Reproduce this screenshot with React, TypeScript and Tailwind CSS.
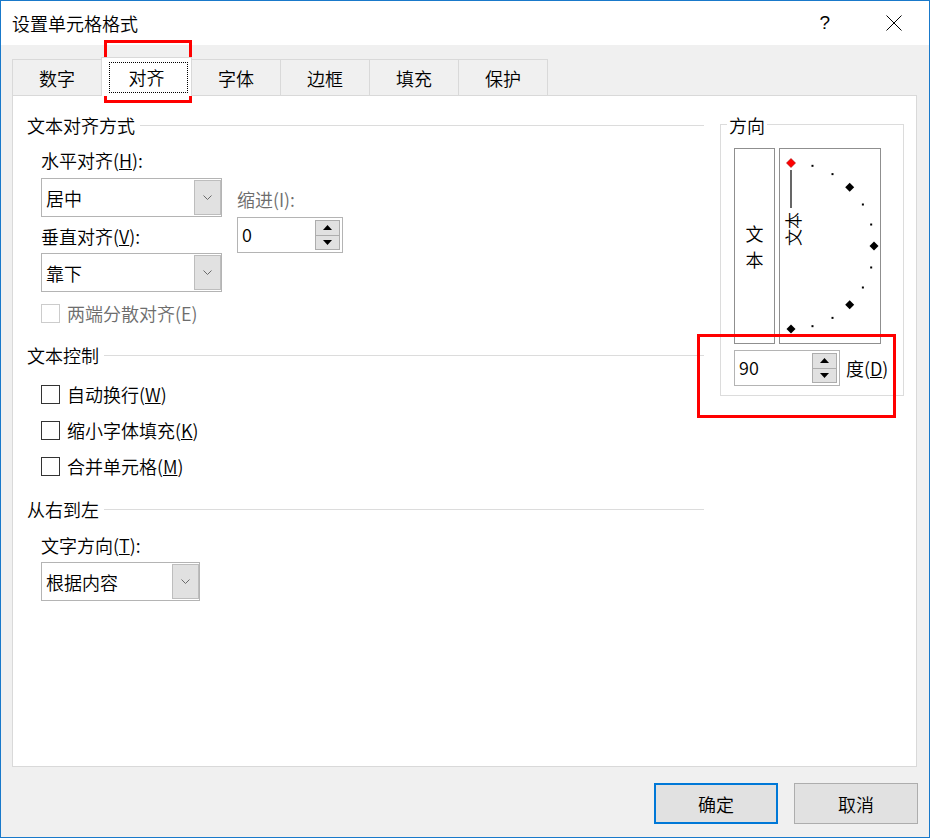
import React from "react";

const Chevron = () => (
  <svg width="9" height="5" viewBox="0 0 9 5">
    <polyline points="0.5,0.5 4.5,4.5 8.5,0.5" fill="none" stroke="#6a6a6a" strokeWidth="1" />
  </svg>
);

function Select({ value, width }: { value: string; width: string }) {
  return (
    <div className={`${width} h-[39px] flex border border-[#b4b4b4] bg-white`}>
      <div className="flex-1 flex items-center pl-[4px]">{value}</div>
      <div className="w-[27px] my-[1px] bg-[#e1e1e1] border border-[#bdbdbd] flex items-center justify-center">
        <Chevron />
      </div>
    </div>
  );
}

function Spinner({ value }: { value: string }) {
  return (
    <div className="w-[106px] h-[36px] flex border border-[#b4b4b4] bg-white">
      <div className="flex-1 flex items-center pl-[4px] pb-[2px]">{value}</div>
      <div className="w-[25px] my-[2px] mr-[2px] flex flex-col">
        <div className="flex-1 bg-[#e1e1e1] border border-[#adadad] flex items-center justify-center">
          <svg width="9" height="5" viewBox="0 0 9 5">
            <polygon points="0,5 4.5,0 9,5" fill="#000" />
          </svg>
        </div>
        <div className="flex-1 bg-[#e1e1e1] border border-[#adadad] border-t-0 flex items-center justify-center">
          <svg width="9" height="5" viewBox="0 0 9 5">
            <polygon points="0,0 4.5,5 9,0" fill="#000" />
          </svg>
        </div>
      </div>
    </div>
  );
}

function Heading({ text, className = "" }: { text: string; className?: string }) {
  return (
    <div className={`flex items-center h-[24px] ${className}`}>
      <span>{text}</span>
      <div className="flex-1 h-px bg-[#dcdcdc] ml-[5px]" />
    </div>
  );
}

function Check({ children, disabled, className = "" }: { children: React.ReactNode; disabled?: boolean; className?: string }) {
  return (
    <div className={`flex items-center h-[24px] pl-[14px] ${className}`}>
      <div
        className={`w-[19px] h-[19px] bg-white border ${disabled ? "border-[#cccccc]" : "border-[#333333]"}`}
      />
      <span className={`ml-[7px] ${disabled ? "text-[#6d6d6d]" : ""}`}>{children}</span>
    </div>
  );
}

function Dial() {
  const cx = 11;
  const cy = 97;
  const r = 83;
  const angles = [90, 75, 60, 45, 30, 15, 0, -15, -30, -45, -60, -75, -90];
  return (
    <svg width="100" height="194" viewBox="0 0 100 194">
      {angles.map((a) => {
        const x = cx + r * Math.cos((a * Math.PI) / 180);
        const y = cy - r * Math.sin((a * Math.PI) / 180);
        if (a % 45 === 0) {
          const s = 4.5;
          return (
            <polygon
              key={a}
              points={`${x},${y - s} ${x + s},${y} ${x},${y + s} ${x - s},${y}`}
              fill={a === 90 ? "#ff0000" : "#000"}
              stroke={a === 90 ? "#a00000" : "none"}
              strokeWidth="0.6"
            />
          );
        }
        return <rect key={a} x={x - 1} y={y - 1} width="2" height="2" fill="#000" />;
      })}
      <line x1={cx} y1={21} x2={cx} y2={59} stroke="#000" strokeWidth="1.2" />
      <text
        transform="translate(12,80) rotate(-90)"
        textAnchor="middle"
        dominantBaseline="central"
        fontSize="17"
        fontFamily="'Noto Sans CJK SC', sans-serif"
        fill="#000"
      >
        文本
      </text>
    </svg>
  );
}

const tabs = ["数字", "对齐", "字体", "边框", "填充", "保护"];

export default function App() {
  return (
    <div className="relative w-[930px] h-[838px] border border-[#1979ca] bg-[#f0f0f0] flex flex-col text-[18px] leading-[24px] font-[350] text-black font-['Noto_Sans_CJK_SC','Liberation_Sans',sans-serif]">
      {/* title bar */}
      <div className="h-[44px] bg-white flex items-center pl-[11px] shrink-0">
        <span>设置单元格格式</span>
        <span className="ml-auto mr-[56px] text-[19px] font-['Liberation_Sans',sans-serif]">?</span>
        <svg width="16" height="16" viewBox="0 0 16 16" className="mr-[27px]">
          <path d="M0.5 0.5 L15.5 15.5 M15.5 0.5 L0.5 15.5" stroke="#000" strokeWidth="1" />
        </svg>
      </div>

      {/* tabs */}
      <div className="mt-[12px] h-[38px] flex items-end pl-[11px] shrink-0">
        {tabs.map((t, i) =>
          i === 1 ? (
            <div
              key={t}
              className="relative z-10 -ml-px -mb-px w-[91px] h-[39px] bg-white border border-b-0 border-[#d9d9d9] flex items-center justify-center"
            >
              {t}
              <div className="absolute left-[7px] right-[3px] top-[4px] bottom-[3px] border border-dotted border-black" />
            </div>
          ) : (
            <div
              key={t}
              className={`${i === 0 ? "" : "-ml-px"} w-[90px] h-[36px] border border-b-0 border-[#d9d9d9] flex items-center justify-center`}
            >
              {t}
            </div>
          )
        )}
      </div>

      {/* panel */}
      <div className="mx-[11px] w-[905px] h-[672px] bg-white border border-[#d9d9d9] flex pl-[14px] pt-[17px] shrink-0">
        <div className="w-[677px] flex flex-col">
          <Heading text="文本对齐方式" />
          <div className="mt-[11px] pl-[14px]">
            水平对齐(<u>H</u>):
          </div>
          <div className="mt-[6px] pl-[14px] flex">
            <div className="flex flex-col">
              <Select value="居中" width="w-[181px]" />
              <div className="mt-[7px]">
                垂直对齐(<u>V</u>):
              </div>
              <div className="mt-[5px]">
                <Select value="靠下" width="w-[181px]" />
              </div>
            </div>
            <div className="ml-[15px] flex flex-col pt-[9px]">
              <div className="text-[#6d6d6d]">缩进(I):</div>
              <div className="mt-[6px]">
                <Spinner value="0" />
              </div>
            </div>
          </div>
          <Check disabled className="mt-[9px]">
            两端分散对齐(E)
          </Check>

          <Heading text="文本控制" className="mt-[18px]" />
          <Check className="mt-[15px]">
            自动换行(<u>W</u>)
          </Check>
          <Check className="mt-[12px]">
            缩小字体填充(<u>K</u>)
          </Check>
          <Check className="mt-[12px]">
            合并单元格(<u>M</u>)
          </Check>

          <Heading text="从右到左" className="mt-[19px]" />
          <div className="mt-[12px] pl-[14px]">
            文字方向(<u>T</u>):
          </div>
          <div className="mt-[5px] pl-[14px]">
            <Select value="根据内容" width="w-[159px]" />
          </div>
        </div>

        {/* orientation group */}
        <div className="relative ml-[16px] mt-[11px] w-[184px] h-[272px] border border-[#dcdcdc] pl-[13px] pt-[23px]">
          <div className="absolute -top-[12px] left-[6px] px-[2px] bg-white">方向</div>
          <div className="flex">
            <div className="w-[41px] h-[196px] border border-[#8f8f8f] flex flex-col items-center justify-center leading-[26px]">
              <span>文</span>
              <span>本</span>
            </div>
            <div className="ml-[4px] w-[102px] h-[196px] border border-[#8f8f8f]">
              <Dial />
            </div>
          </div>
          <div className="mt-[6px] flex items-center">
            <Spinner value="90" />
            <span className="ml-[6px]">
              度(<u>D</u>)
            </span>
          </div>
        </div>
      </div>

      {/* buttons */}
      <div className="mt-[16px] flex justify-end pr-[11px] gap-[16px]">
        <div className="w-[124px] h-[41px] bg-[#e1e1e1] border-2 border-[#0078d7] flex items-center justify-center">
          确定
        </div>
        <div className="w-[124px] h-[41px] bg-[#e1e1e1] border border-[#adadad] flex items-center justify-center">
          取消
        </div>
      </div>

      {/* red annotation boxes */}
      <div className="absolute left-[103px] top-[39px] w-[88px] h-[63px] border-[3px] border-[#ff0000]" />
      <div className="absolute left-[696px] top-[333px] w-[199px] h-[84px] border-[3px] border-[#ff0000]" />
    </div>
  );
}
